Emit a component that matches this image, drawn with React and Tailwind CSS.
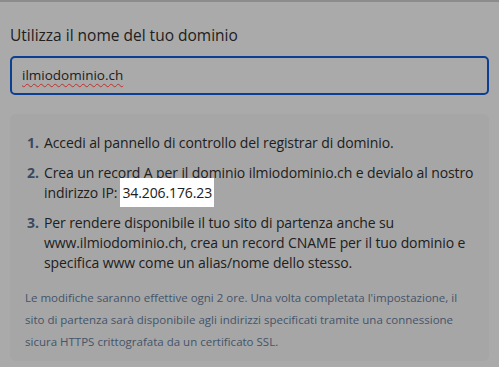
const STEPS = [
  { n: '1.', body: <>Accedi al pannello di controllo del registrar di dominio.</> },
  {
    n: '2.',
    body: (
      <>
        Crea un record A per il dominio ilmiodominio.ch e devialo al nostro
        <br />
        indirizzo IP:<span className="ml-[3px] bg-white px-[2px] py-[5px]">34.206.176.23</span>
      </>
    ),
  },
  {
    n: '3.',
    body: (
      <>
        Per rendere disponibile il tuo sito di partenza anche su
        <br />
        www.ilmiodominio.ch, crea un record CNAME per il tuo dominio e
        <br />
        specifica www come un alias/nome dello stesso.
      </>
    ),
  },
]

export default function App() {
  return (
    <div
      className="w-[499px] h-[367px] overflow-hidden bg-[#aaaaaa] border-t-2 border-[#8c8c8c] text-[#202020]"
      style={{ fontFamily: '"Open Sans", "Noto Sans", sans-serif' }}
    >
      <div className="px-[10px] pt-[21px]">
        <h2 className="text-[15.5px] leading-[24px]">Utilizza il nome del tuo dominio</h2>

        <div className="mt-[9px] h-[39px] rounded-[5px] border-2 border-[#0b3f94] flex items-center px-[10px]">
          <span className="text-[13.5px] underline decoration-wavy decoration-[#c0302a] decoration-1 underline-offset-[3px]">
            ilmiodominio.ch
          </span>
        </div>

        <div className="mt-[19px] h-[247px] rounded-[6px] bg-[#a6a6a6] pl-[17px] pr-[6px] pt-[19px]">
          <ol className="flex flex-col gap-[10px]">
            {STEPS.map(s => (
              <li key={s.n} className="flex text-[14px] leading-[20px] tracking-[-0.1px] whitespace-nowrap">
                <span className="w-[17px] flex-shrink-0 font-bold text-[#3a4a5e]">{s.n}</span>
                <span>{s.body}</span>
              </li>
            ))}
          </ol>

          <p className="mt-[14px] text-[11.5px] leading-[22px] text-[#44546a] -ml-[2px] whitespace-nowrap">
            Le modifiche saranno effettive ogni 2 ore. Una volta completata l'impostazione, il
            <br />
            sito di partenza sarà disponibile agli indirizzi specificati tramite una connessione
            <br />
            sicura HTTPS crittografata da un certificato SSL.
          </p>
        </div>
      </div>
    </div>
  )
}
